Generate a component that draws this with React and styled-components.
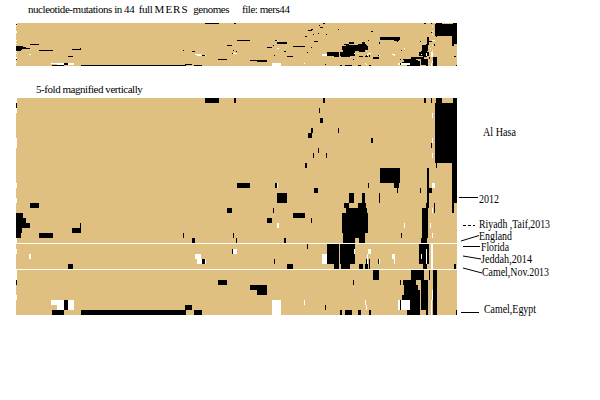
import React from "react";
import styled, { createGlobalStyle } from "styled-components";

const Global = createGlobalStyle`
  html, body { margin: 0; padding: 0; background: #ffffff; }
  body { font-family: "Liberation Serif", "Times New Roman", serif; color: #000; }
`;

const TAN = "#e0c080";
const LEFT = 16;
const WIDTH = 441;

// [rowStart, rowEnd(exclusive), xStart, xEnd, colour] in page x pixels
const SEGS = [
  [0, 3, 16, 17, "w"], [8, 10, 16, 17, "w"], [17, 18, 16, 17, "w"], [20, 21, 16, 17, "w"],
  [28, 29, 16, 17, "w"], [30, 31, 16, 17, "w"], [34, 36, 16, 17, "w"], [39, 40, 16, 17, "w"],
  [0, 1, 205, 219], [0, 1, 234, 236], [0, 1, 323, 325], [0, 1, 424, 426], [0, 1, 431, 432],
  [0, 1, 436, 442], [0, 1, 453, 457],
  [1, 13, 435, 457], [13, 21, 452, 457], [21, 23, 452, 454],
  [3, 4, 432, 433, "w"], [8, 9, 432, 433, "w"], [11, 12, 432, 433, "w"], [9, 10, 431, 432], [13, 14, 436, 437],
  [1, 2, 16, 17],
  [2, 3, 319, 320], [4, 5, 320, 323], [6, 7, 311, 313], [7, 8, 308, 312], [6, 7, 338, 339],
  [8, 9, 371, 373], [10, 11, 318, 319], [11, 12, 313, 314], [11, 12, 326, 327], [13, 14, 305, 307],
  [14, 17, 380, 400], [17, 18, 394, 399],
  [17, 18, 237, 250], [17, 18, 275, 277], [17, 18, 277, 278, "w"], [19, 21, 277, 287],
  [18, 19, 314, 318], [17, 18, 368, 369], [18, 19, 397, 398], [18, 19, 420, 421],
  [14, 22, 427, 429], [22, 28, 422, 428], [28, 29, 421, 427],
  [18, 19, 429, 432], [17, 18, 432, 435, "w"],
  [19, 21, 349, 354], [19, 21, 362, 365], [21, 22, 344, 349], [21, 22, 358, 366], [19, 21, 379, 380],
  [21, 23, 434, 435], [21, 22, 426, 429],
  [22, 23, 227, 232],
  [22, 23, 346, 367], [23, 27, 342, 368], [27, 28, 343, 365], [28, 29, 343, 355], [28, 29, 359, 365],
  [21, 22, 30, 39],
  [23, 24, 16, 23], [24, 25, 16, 26], [25, 26, 16, 30], [26, 27, 16, 22], [27, 28, 16, 21],
  [27, 28, 39, 53], [26, 27, 72, 81], [25, 26, 80, 81],
  [27, 28, 183, 184], [28, 29, 192, 195],
  [31, 32, 29, 31, "w"],
  [31, 32, 195, 201, "w"], [32, 33, 197, 202, "w"], [32, 33, 202, 205], [32, 33, 205, 206, "w"],
  [33, 34, 68, 73],
  [36, 37, 16, 17], [36, 37, 218, 227],
  [40, 41, 51, 64, "w"], [40, 42, 64, 68], [40, 42, 68, 74, "w"], [41, 42, 57, 64, "w"],
  [42, 43, 52, 64], [42, 43, 81, 186],
  [41, 42, 185, 192], [42, 43, 194, 202],
  [22, 23, 273, 274], [23, 24, 293, 305], [24, 25, 267, 272], [24, 25, 311, 312],
  [25, 26, 277, 279, "w"], [27, 28, 233, 234], [28, 29, 236, 237], [28, 29, 284, 286],
  [22, 23, 432, 433, "w"],
  [25, 26, 404, 405, "w"], [27, 28, 401, 402], [25, 26, 430, 431, "w"], [27, 28, 432, 433, "w"], [27, 29, 425, 427],
  [29, 33, 327, 339], [29, 33, 340, 355], [31, 33, 322, 327, "w"], [30, 31, 354, 355, "w"],
  [33, 34, 334, 339], [33, 34, 341, 350],
  [30, 31, 368, 371, "w"], [31, 33, 367, 368, "w"], [32, 33, 366, 367], [33, 34, 359, 363],
  [33, 34, 365, 368], [32, 34, 369, 370],
  [32, 33, 378, 379], [32, 33, 379, 380, "w"],
  [31, 32, 392, 395, "w"], [32, 33, 394, 395, "w"],
  [32, 33, 274, 275], [33, 34, 287, 293], [29, 30, 307, 308], [30, 31, 232, 233], [30, 31, 233, 237, "w"],
  [29, 33, 419, 429], [31, 32, 421, 422, "w"], [30, 33, 426, 427, "w"], [33, 34, 423, 427],
  [29, 34, 431, 433, "w"], [33, 34, 454, 456],
  [34, 36, 373, 379], [34, 36, 411, 424], [34, 36, 429, 430], [34, 43, 433, 437], [38, 40, 432, 433, "w"],
  [36, 37, 225, 227], [36, 37, 353, 354], [36, 37, 400, 401],
  [37, 38, 250, 267], [38, 39, 257, 267],
  [36, 37, 403, 416], [37, 40, 404, 418], [39, 40, 402, 410],
  [36, 42, 421, 428],
  [40, 41, 304, 305, "w"], [40, 43, 272, 281, "w"],
  [41, 42, 325, 326],
  [40, 41, 365, 366, "w"], [41, 42, 366, 367, "w"],
  [40, 42, 398, 411, "w"], [40, 42, 400, 401], [38, 43, 410, 420],
  [42, 43, 340, 342], [42, 43, 345, 352], [42, 43, 358, 361], [42, 43, 369, 371],
  [42, 43, 407, 410], [42, 43, 426, 428], [40, 43, 431, 432, "w"], [42, 43, 456, 457],
];

const ROWS = 43;

const Page = styled.div`
  width: 600px;
  height: 400px;
  display: flex;
  flex-direction: column;
  overflow: hidden;
`;

const TitleRow = styled.div`
  height: 23px;
  display: flex;
  align-items: flex-start;
  padding-left: 28px;
  font-size: 11px;
  line-height: 14px;
  letter-spacing: -0.45px;
  white-space: pre;
`;

const Title = styled.span`
  flex: 0 0 214px;
  padding-top: 2px;
`;

const Spaced = styled.span`
  letter-spacing: 1px;
`;

const FileName = styled.span`
  padding-top: 2px;
`;

const StripBox = styled.svg`
  display: block;
  margin-left: ${LEFT}px;
`;

const Caption = styled.div`
  height: 32px;
  display: flex;
  align-items: flex-end;
  padding-left: 36px;
  box-sizing: border-box;
  padding-bottom: 3px;
  font-size: 11px;
  line-height: 12px;
  letter-spacing: -0.45px;
`;

const FigureBox = styled.svg`
  display: block;
  margin-left: ${LEFT}px;
  font-family: "Liberation Serif", "Times New Roman", serif;
  font-size: 11.5px;
`;

const colour = (c) => (c === "w" ? "#ffffff" : "#000000");

function Strip() {
  return (
    <StripBox width={WIDTH} height={ROWS} shapeRendering="crispEdges">
      <rect x="0" y="0" width={WIDTH} height={ROWS} fill={TAN} />
      {SEGS.map(([r0, r1, x0, x1, c], i) => (
        <rect key={i} x={x0 - LEFT} y={r0} width={x1 - x0} height={r1 - r0} fill={colour(c)} />
      ))}
    </StripBox>
  );
}

const yB = (r) => r * 5 + (r >= 29 ? 1 : 0) + (r >= 34 ? 1 : 0);

const LABELS = [
  { t: "Al Hasa", x: 467, y: 38, w: 33 },
  { t: "2012", x: 463, y: 105, w: 20, line: [443, 99.5, 462, 99.5] },
  { t: "Riyadh ,Taif,2013", x: 463, y: 129.5, w: 71, line: [447, 127.5, 459, 127.5], dash: true },
  { t: "England", x: 463, y: 142, w: 33, line: [445, 143, 463, 137.5] },
  { t: "Florida", x: 465, y: 152.5, w: 28, line: [447, 148.5, 464, 148.5] },
  { t: "Jeddah,2014", x: 465, y: 165, w: 51, line: [447, 158, 465, 161] },
  { t: "Camel,Nov.2013", x: 466, y: 178, w: 67, line: [447, 170, 466, 175] },
  { t: "Camel,Egypt", x: 468, y: 215, w: 52, line: [445, 214.5, 463, 214.5] },
];

function Figure() {
  const h = yB(ROWS);
  return (
    <FigureBox width={584} height={224}>
      <g shapeRendering="crispEdges">
        <rect x="0" y="0" width={WIDTH} height={h} fill={TAN} />
        {SEGS.map(([r0, r1, x0, x1, c], i) => (
          <rect key={i} x={x0 - LEFT} y={yB(r0)} width={x1 - x0} height={yB(r1) - yB(r0)} fill={colour(c)} />
        ))}
        <rect x="0" y="145" width={WIDTH} height="1" fill="#ffffff" />
        <rect x="0" y="171" width={WIDTH} height="1" fill="#ffffff" />
      </g>
      {LABELS.map((l) => (
        <g key={l.t}>
          {l.line && (
            <line
              x1={l.line[0]}
              y1={l.line[1]}
              x2={l.line[2]}
              y2={l.line[3]}
              stroke="#000"
              strokeWidth="1"
              strokeDasharray={l.dash ? "3 2" : undefined}
            />
          )}
          <text x={l.x} y={l.y} textLength={l.w} lengthAdjust="spacingAndGlyphs" fill="#000">
            {l.t}
          </text>
        </g>
      ))}
    </FigureBox>
  );
}

export default function App() {
  return (
    <>
      <Global />
      <Page>
        <TitleRow>
          <Title>
            nucleotide-mutations in 44  full <Spaced>MERS</Spaced>  genomes
          </Title>
          <FileName>file: mers44</FileName>
        </TitleRow>
        <Strip />
        <Caption>5-fold magnified vertically</Caption>
        <Figure />
      </Page>
    </>
  );
}
